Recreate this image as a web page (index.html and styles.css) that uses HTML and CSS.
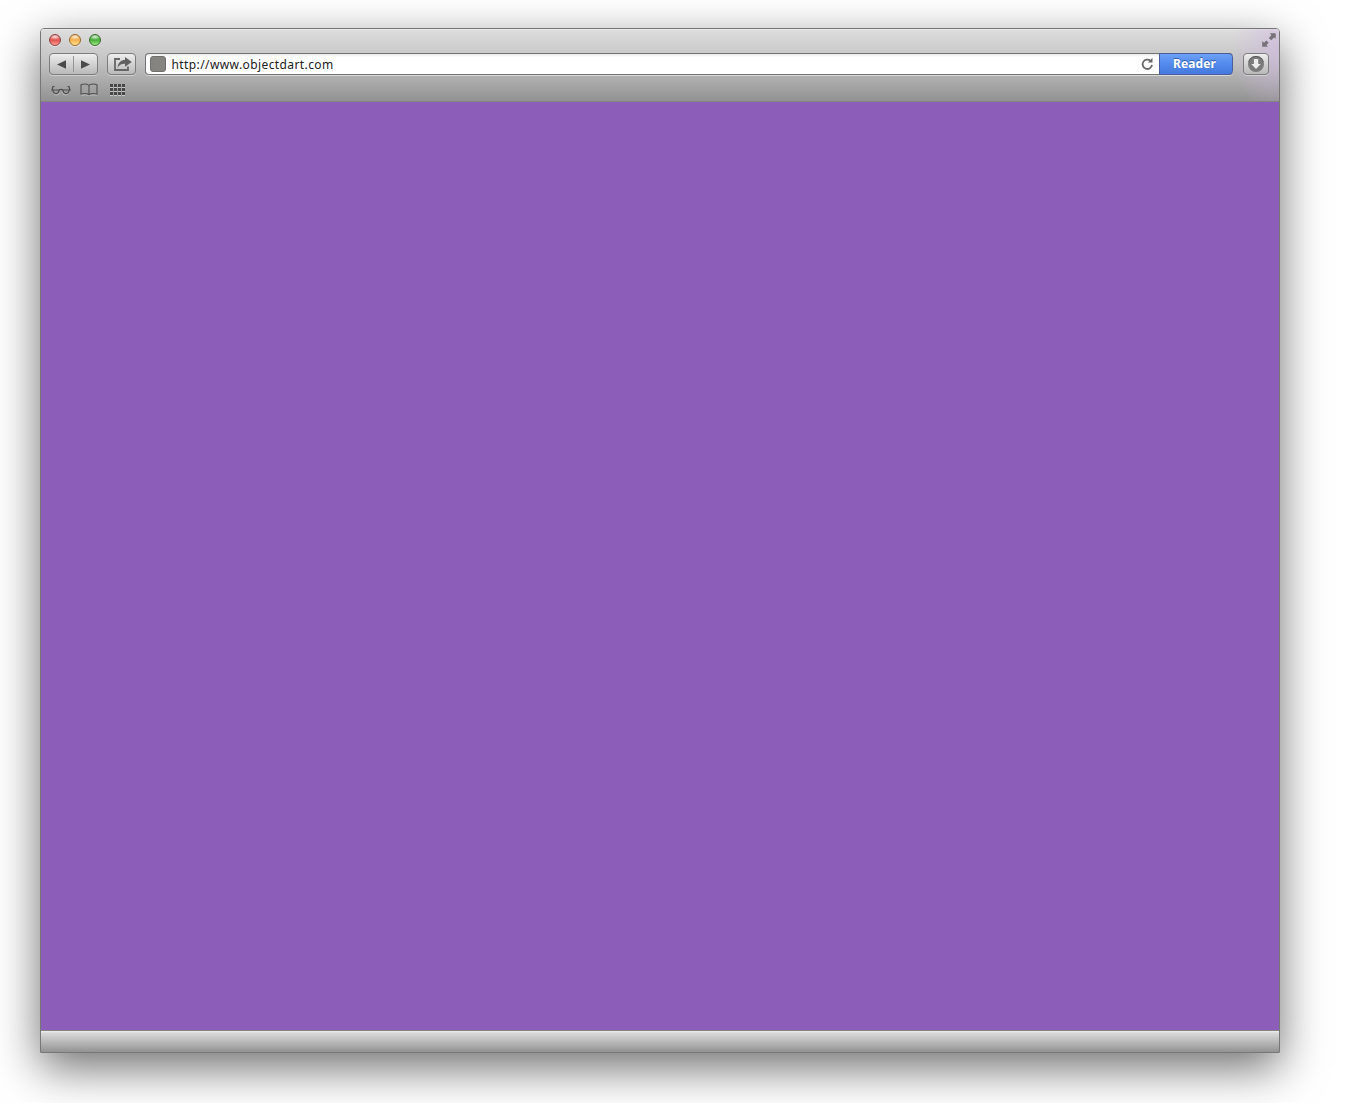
FILE: index.html
```html
<!DOCTYPE html>
<html lang="en">
<head>
<meta charset="utf-8">
<title>Browser window</title>
<link rel="stylesheet" href="styles.css">
</head>
<body>
<main class="window">
  <header class="chrome">
    <div class="titlebar">
      <div class="lights"><span class="light close"></span><span class="light minimize"></span><span class="light grow"></span></div>
      <svg class="expand" width="14" height="14" viewBox="0 0 14 14" fill="#777279"><path d="M7.800.3h5.900v5.500l-1.700-1.300-2.700 2.800-2.500-2.400 2.600-2.600z"/><path d="M.2 8.200l1.900 1.500 2.200-2.200 2.400 2.300-2.300 2.200 1.500 1.800H.2z"/></svg>
    </div>
    <div class="toolbar">
      <div class="button nav">
        <span><svg width="9" height="9" viewBox="0 0 9 9"><path d="M0 4.500L9 .3v8.400z" fill="#4a4a4a"/></svg></span>
        <span><svg width="9" height="9" viewBox="0 0 9 9"><path d="M9 4.500L0 .3v8.400z" fill="#4a4a4a"/></svg></span>
      </div>
      <div class="button share">
        <svg width="20" height="16" viewBox="0 0 20 16"><path d="M7 3H2v11h13v-3.500" fill="none" stroke="#666" stroke-width="1.800"/><path d="M4.700 11.500C5 6.500 8 4 12 4V1L18.800 6 12 10.700V7.800C9 7.700 6.600 8.700 4.700 11.500z" fill="#606060"/></svg>
      </div>
      <div class="address">
        <span class="favicon"></span>
        <span class="url">http://www.objectdart.com</span>
        <svg class="reload" width="13" height="14" viewBox="0 0 13 14"><path d="M9.500 3.800A4.700 4.700 0 1 0 11 7.800" fill="none" stroke="#696969" stroke-width="1.800"/><path d="M11.500.7v4.700H6.800z" fill="#696969"/></svg>
        <span class="reader">Reader</span>
      </div>
      <div class="button download">
        <svg width="18" height="18" viewBox="0 0 18 18"><circle cx="9" cy="9" r="8" fill="#7b7b7b"/><path d="M1.800 6.800a7.500 7.500 0 0 1 14.400 0" fill="none" stroke="#5c5c5c"/><path d="M6.900 4h4.300v5h2.600L9 14 4.200 9h2.700z" fill="#ededed"/></svg>
      </div>
    </div>
    <div class="bookmarks">
      <svg class="icon" width="20" height="12" viewBox="0 0 20 12"><path d="M2 8q1 3 3.500 3T9 8M11 8q1 3 3.500 3T18 8" fill="none" stroke="#eee" stroke-opacity=".4"/><g fill="none" stroke="#4c4c4c" stroke-width="1.200"><path d="M3.500 2.500H2L1 6h7q2-1.400 4 0h7l-1-3.500h-1.500"/><path d="M2 6c0 4.700 6 4.700 6 0M12 6c0 4.700 6 4.700 6 0"/></g></svg>
      <svg class="icon" width="18" height="13" viewBox="0 0 18 13"><path d="M1 12.300q5-1 8 .2 3-1.200 8-.2" fill="none" stroke="#ddd" stroke-opacity=".5"/><path d="M1 1.700q5-1.600 8 .7 3-2.300 8-.7v9.300q-5-1.300-8 .7-3-2-8-.7zM9 2.200v9.500" fill="none" stroke="#505050" stroke-width="1.100"/></svg>
      <svg class="icon" width="15" height="12" viewBox="0 0 15 12"><path d="M0 3.500h15M0 7.500h15M0 11.500h15" stroke="#c8c8c8" stroke-dasharray="3 1"/><path d="M0 1.500h15M0 5.500h15M0 9.500h15" stroke="#484848" stroke-width="3" stroke-dasharray="3 1"/></svg>
    </div>
  </header>
  <section class="page"></section>
  <footer class="status"></footer>
</main>
</body>
</html>
```
FILE: styles.css
```css
* { box-sizing: border-box; }
html, body { height: 100%; }
body {
  margin: 0;
  padding: 28px 75px 50px 40px;
  overflow: hidden;
  background: #fff;
  font-family: "Noto Sans", sans-serif;
}
svg { display: block; flex: none; }
.window {
  display: flex;
  flex-direction: column;
  width: 1240px;
  height: 1025px;
  border: 1px solid #777;
  border-radius: 4px 4px 0 0;
  box-shadow: 0 15px 46px rgba(0, 0, 0, .57);
}
.chrome {
  height: 73px;
  flex: none;
  border-bottom: 1px solid #858585;
  border-radius: 3px 3px 0 0;
  background:
    radial-gradient(ellipse 48px 66px at 100% 28%, rgba(206, 181, 224, .6), rgba(206, 181, 224, 0)),
    linear-gradient(#e9e9e9 0, #dcdcdc 2px, #c3c3c3 32px, #929292 100%);
}
.titlebar {
  display: flex;
  justify-content: space-between;
  height: 24px;
  padding: 4px 3px 0 8px;
}
.lights { display: flex; gap: 8px; padding-top: 1px; }
.light {
  width: 12px;
  height: 12px;
  border: 1px solid;
  border-radius: 50%;
  box-shadow: 0 1px rgba(255, 255, 255, .45);
}
.close { border-color: #844; background: radial-gradient(ellipse 6px 3px at 50% 18%, rgba(255, 255, 255, .8), transparent), linear-gradient(#e06660, #e35b56 55%, #ff9b94); }
.minimize { border-color: #966827; background: radial-gradient(ellipse 6px 3px at 50% 18%, rgba(255, 255, 255, .8), transparent), linear-gradient(#eaa349, #f5b557 55%, #ffe58b); }
.grow { border-color: #3b6a2d; background: radial-gradient(ellipse 6px 3px at 50% 18%, rgba(255, 255, 255, .8), transparent), linear-gradient(#54a54c, #4eb540 55%, #9fea83); }
.toolbar { display: flex; height: 22px; padding: 0 10px 0 8px; }
.button {
  display: flex;
  align-items: center;
  justify-content: center;
  height: 22px;
  border: 1px solid #7d7d7d;
  border-radius: 4px;
  background: linear-gradient(#eee, #d5d5d5 45%, #b9b9b9);
  box-shadow: 0 1px rgba(255, 255, 255, .38);
}
.nav { width: 49px; margin-right: 9px; }
.nav span { display: flex; flex: 1; align-items: center; justify-content: center; height: 16px; }
.nav span + span { border-left: 1px solid #969696; }
.share { width: 29px; margin-right: 9px; padding-left: 2px; }
.address {
  display: flex;
  align-items: center;
  flex: 1;
  height: 22px;
  margin-right: 10px;
  padding-left: 4px;
  border: 1px solid #747474;
  border-right: 0;
  border-radius: 4px;
  background: linear-gradient(#e9e9e9 0, #fff 3px);
  box-shadow: 0 1px rgba(255, 255, 255, .5);
}
.favicon { width: 16px; height: 16px; border: 1px solid #6f6f6d; border-radius: 3px; background: #858481; }
.url { flex: 1; padding: 2px 0 0 5.500px; color: #222; font-size: 12px; line-height: 20px; letter-spacing: .4px; }
.reload { margin-right: 5px; }
.reader {
  width: 74px;
  height: 22px;
  border: 1px solid #4a5d9c;
  border-radius: 0 4px 4px 0;
  background: linear-gradient(#6da0f7, #558ced 45%, #4478dd);
  color: #fff;
  font-size: 12px;
  font-weight: 700;
  line-height: 20px;
  letter-spacing: .1px;
  padding-right: 3px;
  text-align: center;
  text-shadow: 0 -1px #315fae;
}
.download { width: 26px; }
.bookmarks { display: flex; align-items: center; gap: 9px; height: 26px; padding: 3px 0 0 10px; }
.icon:last-child { margin-left: 3px; }
.page { flex: 1; background: #8d5dba; }
.status {
  height: 22px;
  flex: none;
  border-top: 1px solid #858585;
  background: linear-gradient(#efefef 0, #d9d9d9 2px, #939393 100%);
}
```
